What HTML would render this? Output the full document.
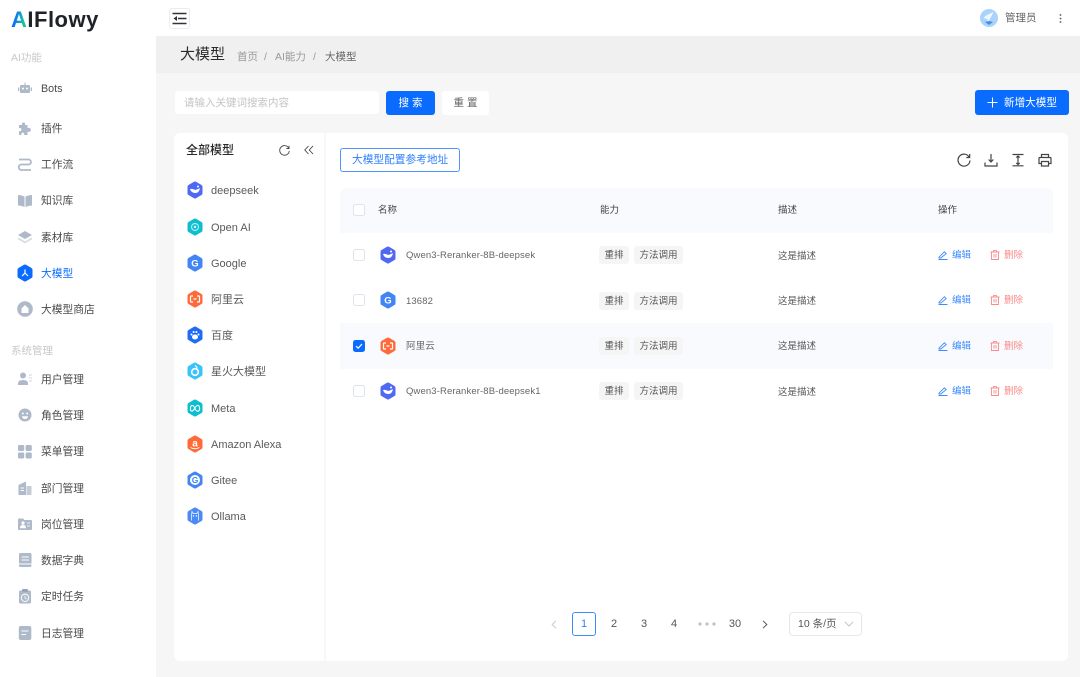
<!DOCTYPE html>
<html lang="zh"><head><meta charset="utf-8"><title>大模型</title>
<style>
*{box-sizing:border-box;margin:0;padding:0}
html,body{width:1080px;height:677px;overflow:hidden;background:#f6f6f6}
body{position:relative;font-family:"Liberation Sans","Noto Sans CJK SC",sans-serif;color:#444;filter:blur(.35px)}
.a{position:absolute}
.t{position:absolute;white-space:nowrap;line-height:16px;height:16px;margin-top:1px}
.nav{font-size:10.75px;color:#4a4a4a;left:41px}
.gr{font-size:10.5px;color:#c9c9c9;left:11px}
.m{font-size:11px;color:#5a5a5a;left:211px}
.n{font-size:9.5px;color:#666;left:406px;letter-spacing:.12px}
.d{font-size:9.5px;color:#555;left:778px}
.h{font-size:9.5px;color:#444}
.tag{position:absolute;height:18px;line-height:20px;background:#f5f5f5;border-radius:3px;font-size:9.5px;color:#555;text-align:center}
.cb{position:absolute;left:353px;width:12px;height:12px;border:1px solid #dfe3ea;border-radius:2.5px;background:#fff}
.blue{font-size:9.5px;color:#3d8bff;left:952px}
.red{font-size:9.5px;color:#fa8a8a;left:1004px}
.pg{font-size:11px;color:#555;text-align:center;width:24px;margin-top:0}
svg{position:absolute;overflow:visible}
.ic{fill:#aeb9ca}
</style></head><body>
<svg width="0" height="0" style="position:absolute"><defs>
<symbol id="hex" viewBox="0 0 18 18"><polygon points="9,2.500 14.500,5.700 14.500,12.300 9,15.500 3.500,12.300 3.500,5.700" fill="currentColor" stroke="currentColor" stroke-width="4" stroke-linejoin="round"/></symbol>
<symbol id="whale" viewBox="0 0 18 18"><path d="M4 8c1 3 3 4 5.500 4 2.500 0 4-2 4.500-5-1 .8-2 .8-2.800 1.200C10 9 8.500 9 7.500 8.300 6.500 7.600 5 8 4 8z" fill="#fff"/><circle cx="12" cy="5.500" r="1" fill="#fff"/></symbol>
<symbol id="ali" viewBox="0 0 18 18"><path d="M7 6H5.200Q4.500 6 4.500 6.800v4.400q0 .8.700.8H7M11 6h1.800q.7 0 .7.800v4.400q0 .8-.7.800H11M7.500 9h3" fill="none" stroke="#fff" stroke-width="1.200"/></symbol>
<symbol id="edit" viewBox="0 0 10 10"><path d="M1 7.200 6.400 1.800 8.200 3.600 2.800 8H1zM.5 9.500h9" fill="none" stroke="#3d8bff" stroke-width=".9"/></symbol>
<symbol id="del" viewBox="0 0 10 10"><path d="M.5 2h9M3.500 2V.6h3V2M1.500 2v7.500h7V2M4 4v3.500M6 4v3.500" fill="none" stroke="#fa8a8a" stroke-width=".9"/></symbol>
</defs></svg>

<!-- main zones -->
<div class="a" style="left:156px;top:36px;width:924px;height:37px;background:#f0f0f0"></div>
<div class="a" style="left:0;top:0;width:156px;height:677px;background:#fff"></div>
<div class="a" style="left:0;top:0;width:1080px;height:36px;background:#fff"></div>

<!-- logo -->
<div class="t" style="left:11px;top:6px;height:26px;line-height:26px;font-size:22px;font-weight:700;color:#1f2226;letter-spacing:.5px"><span style="background:linear-gradient(100deg,#0a6cff 25%,#16c0a0 70%);-webkit-background-clip:text;background-clip:text;color:transparent">A</span>IFlowy</div>

<!-- sidebar groups -->
<div class="t gr" style="top:49px">AI功能</div>
<div class="t gr" style="top:342px">系统管理</div>

<div class="t nav" style="top:80px">Bots</div>
<div class="t nav" style="top:120px">插件</div>
<div class="t nav" style="top:156px">工作流</div>
<div class="t nav" style="top:192px">知识库</div>
<div class="t nav" style="top:229px">素材库</div>
<div class="t nav" style="top:265px;color:#0a6cff">大模型</div>
<div class="t nav" style="top:301px">大模型商店</div>
<div class="t nav" style="top:371px">用户管理</div>
<div class="t nav" style="top:407px">角色管理</div>
<div class="t nav" style="top:443px">菜单管理</div>
<div class="t nav" style="top:480px">部门管理</div>
<div class="t nav" style="top:516px">岗位管理</div>
<div class="t nav" style="top:552px">数据字典</div>
<div class="t nav" style="top:588px">定时任务</div>
<div class="t nav" style="top:625px">日志管理</div>

<!-- sidebar icons -->
<svg style="left:18px;top:81px" width="14" height="14" viewBox="0 0 14 14"><path class="ic" d="M3 4h8q1 0 1 1v6q0 1-1 1H3q-1 0-1-1V5q0-1 1-1zM6.500 1.500h1V4h-1zM0 6.500h1.300v3.500H0zM12.700 6.500H14v3.500h-1.300z"/><circle cx="5" cy="7.500" r="1" fill="#fff"/><circle cx="9" cy="7.500" r="1" fill="#fff"/></svg>
<svg style="left:18px;top:122px" width="14" height="14" viewBox="0 0 14 14"><path class="ic" d="M1 3h3q-.5-2.500 1.500-2.500T7 3h2.500v3q2-.8 3 .8 1 2-.8 3-1 .4-2.200-.3V13H6q.8-2.300-1.200-2.300T3.600 13H1V9q2 .8 2.400-1.200T1 6z"/></svg>
<svg style="left:18px;top:158px" width="14" height="14" viewBox="0 0 14 14"><path d="M1 1.500h9.500a2.500 2.500 0 0 1 0 5H3.500a2.700 2.700 0 0 0 0 5.500H13" fill="none" stroke="#aeb9ca" stroke-width="1.800"/></svg>
<svg style="left:18px;top:194px" width="14" height="14" viewBox="0 0 14 14"><path class="ic" d="M0 1q3.500 0 6.500 1.500V13Q3.500 11.500 0 11.500zM14 1q-3.500 0-6.500 1.500V13q3-1.500 6.500-1.500z"/></svg>
<svg style="left:18px;top:230px" width="14" height="14" viewBox="0 0 14 14"><path class="ic" d="M7 1l7 4-7 4-7-4z"/><path d="M0 7.500l7 4 7-4v1.800l-7 4-7-4z" fill="#d3dae4"/></svg>
<svg style="left:16px;top:264px" width="18" height="18" color="#0a6cff"><use href="#hex" width="18" height="18"/><path d="M9 5.500v3.500M9 9l-3 3M9 9l3 3" stroke="#fff" stroke-width="1.200" fill="none"/></svg>
<svg style="left:17px;top:301px" width="16" height="16" viewBox="0 0 16 16"><circle cx="8" cy="8" r="7.800" class="ic"/><path d="M4.500 7.500 8 4l3.500 3.500V12h-7z" fill="#fff"/></svg>

<svg style="left:18px;top:372px" width="14" height="14" viewBox="0 0 14 14"><circle cx="5" cy="3.500" r="3" class="ic"/><path class="ic" d="M0 13v-1.500Q0 8 5 8t5 3.500V13z"/><path d="M11 3h3M11 6h3M11 9h3" stroke="#cfd6e1" stroke-width="1"/></svg>
<svg style="left:18px;top:408px" width="14" height="14" viewBox="0 0 14 14"><circle cx="7" cy="7" r="6.500" class="ic"/><circle cx="4.800" cy="5.500" r="1" fill="#fff"/><circle cx="9.200" cy="5.500" r="1" fill="#fff"/><path d="M4 8.200h6Q9.500 11 7 11T4 8.200z" fill="#fff"/></svg>
<svg style="left:18px;top:445px" width="14" height="14" viewBox="0 0 14 14"><rect x="0" y="0" width="6.200" height="6" rx="1.200" class="ic"/><rect x="7.600" y="0" width="6.200" height="6" rx="1.200" class="ic"/><rect x="0" y="7.500" width="6.200" height="6" rx="1.200" class="ic"/><rect x="7.600" y="7.500" width="6.200" height="6" rx="1.200" class="ic"/></svg>
<svg style="left:18px;top:481px" width="14" height="14" viewBox="0 0 14 14"><path class="ic" d="M.5 4 8 .5V14H1q-.5 0-.5-.5z"/><path d="M8.500 5H13q.5 0 .5.500V14h-5z" fill="#c3ccd9"/><path d="M2.500 7h3.500M2.500 9.500h3.500" stroke="#fff"/></svg>
<svg style="left:18px;top:517px" width="14" height="14" viewBox="0 0 14 14"><path class="ic" d="M1 1.500h4l1.500 1.500H13q1 0 1 1v8q0 1-1 1H1q-1 0-1-1V2.500q0-1 1-1z"/><circle cx="5" cy="6" r="1.600" fill="#fff"/><path d="M2.500 10.800q0-2.500 2.500-2.500t2.500 2.500zM9 6h3M9 9h3" fill="#fff" stroke="#fff" stroke-width=".8"/></svg>
<svg style="left:18px;top:553px" width="14" height="14" viewBox="0 0 14 14"><rect x="1" y="0" width="12.500" height="14" rx="1.600" class="ic"/><path d="M3.500 4h7.500M3.500 7h7.500M1 11h12.500" stroke="#fff" stroke-width="1"/></svg>
<svg style="left:18px;top:589px" width="14" height="15" viewBox="0 0 14 15"><rect x="1" y="1.500" width="12" height="13" rx="1.600" class="ic"/><rect x="4" y="0" width="6" height="3" rx="1" fill="#98a5b9"/><circle cx="7" cy="8.800" r="3.700" fill="none" stroke="#fff"/><path d="M7 6.800v2.200l1.500 1" fill="none" stroke="#fff" stroke-width=".8"/></svg>
<svg style="left:18px;top:626px" width="14" height="14" viewBox="0 0 14 14"><rect x=".8" y="0" width="12.500" height="14" rx="2" class="ic"/><path d="M3.500 5h7M3.500 8.500h4.500" stroke="#fff" stroke-width="1.100"/></svg>

<!-- topbar -->
<div class="a" style="left:169px;top:8px;width:21px;height:21px;border:1px solid #e8ecf3;border-radius:3px;background:#fff"></div>
<svg style="left:172px;top:12px" width="15" height="13" viewBox="0 0 15 13"><path d="M.5 1.500h14M6 6.500h8.500M.5 11.500h14" stroke="#333" stroke-width="1.400"/><path d="M5 4v5L1.500 6.500z" fill="#333"/></svg>
<svg style="left:980px;top:9px" width="18" height="18" viewBox="0 0 18 18"><circle cx="9" cy="9" r="9" fill="#a9d3fb"/><path d="M13.500 3 6 6.500 3.500 9 7 10l1 3 2-3z" fill="#eef6ff"/><path d="M5 13l4 3 4-3-4-1z" fill="#4a90e2"/></svg>
<div class="t" style="left:1005px;top:9px;font-size:10.5px;color:#666">管理员</div>
<svg style="left:1059px;top:14px" width="3" height="10" viewBox="0 0 3 10"><circle cx="1.500" cy="1" r=".9" fill="#555"/><circle cx="1.500" cy="4.500" r=".9" fill="#555"/><circle cx="1.500" cy="8" r=".9" fill="#555"/></svg>

<!-- heading -->
<div class="t" style="left:180px;top:44px;height:20px;line-height:20px;font-size:15px;color:#2c2c2c">大模型</div>
<div class="t" style="left:237px;top:48px;font-size:10.5px;color:#999">首页</div>
<div class="t" style="left:264px;top:48px;font-size:10.5px;color:#999">/</div>
<div class="t" style="left:275px;top:48px;font-size:10.5px;color:#999">AI能力</div>
<div class="t" style="left:313px;top:48px;font-size:10.5px;color:#999">/</div>
<div class="t" style="left:325px;top:48px;font-size:10.5px;color:#666">大模型</div>

<!-- search -->
<div class="a" style="left:175px;top:91px;width:204px;height:23px;background:#fff;border-radius:3px"></div>
<div class="t" style="left:184px;top:94px;font-size:10.5px;color:#c4c4c4">请输入关键词搜索内容</div>
<div class="a" style="left:386px;top:91px;width:49px;height:24px;background:#0a6cff;border-radius:3px"></div>
<div class="t" style="left:386px;top:94px;width:49px;text-align:center;font-size:10.5px;color:#fff">搜 索</div>
<div class="a" style="left:442px;top:91px;width:47px;height:24px;background:#fff;border-radius:3px"></div>
<div class="t" style="left:442px;top:94px;width:47px;text-align:center;font-size:10.5px;color:#666">重 置</div>
<div class="a" style="left:975px;top:90px;width:94px;height:25px;background:#0a6cff;border-radius:3px"></div>
<svg style="left:987px;top:97px" width="11" height="11" viewBox="0 0 11 11"><path d="M5.500.5v10M.5 5.500h10" stroke="#fff" stroke-width="1"/></svg>
<div class="t" style="left:1004px;top:94px;font-size:10.6px;color:#fff">新增大模型</div>

<!-- card -->
<div class="a" style="left:174px;top:133px;width:894px;height:528px;background:#fff;border-radius:6px"></div>
<div class="a" style="left:324px;top:133px;width:2px;height:528px;background:#f8f8f8"></div>
<div class="t" style="left:186px;top:141px;font-size:12px;font-weight:500;color:#2a2a2a">全部模型</div>
<svg style="left:279px;top:145px" width="11" height="11" viewBox="0 0 11 11"><path d="M9.800 3.200A4.800 4.800 0 1 0 10.300 6M10 .8v2.700H7.400" fill="none" stroke="#444" stroke-width=".9"/></svg>
<svg style="left:304px;top:145px" width="10" height="10" viewBox="0 0 10 10"><path d="M4.500 1 .8 5l3.700 4M9 1 5.300 5 9 9" fill="none" stroke="#444" stroke-width=".9"/></svg>

<!-- model list -->
<svg style="left:186px;top:181px" width="18" height="18" color="#5069f2"><use href="#hex" width="18" height="18"/><use href="#whale" width="18" height="18"/></svg>
<div class="t m" style="top:182px">deepseek</div>
<svg style="left:186px;top:218px" width="18" height="18" color="#0fbdcf"><use href="#hex" width="18" height="18"/><circle cx="9" cy="9" r="3.500" fill="none" stroke="#a5ecf2" stroke-width="1.200"/><circle cx="9" cy="9" r="1.200" fill="#c9f5f8"/></svg>
<div class="t m" style="top:219px">Open AI</div>
<svg style="left:186px;top:254px" width="18" height="18" color="#4285f4"><use href="#hex" width="18" height="18"/><text x="9" y="12.500" font-size="9.500" font-weight="700" text-anchor="middle" fill="#fff" font-family="Liberation Sans">G</text></svg>
<div class="t m" style="top:255px">Google</div>
<svg style="left:186px;top:290px" width="18" height="18" color="#ff6a3a"><use href="#hex" width="18" height="18"/><use href="#ali" width="18" height="18"/></svg>
<div class="t m" style="top:291px">阿里云</div>
<svg style="left:186px;top:326px" width="18" height="18" color="#1f6bf5"><use href="#hex" width="18" height="18"/><ellipse cx="9" cy="11" rx="3" ry="2.500" fill="#fff"/><circle cx="5.500" cy="8.500" r="1" fill="#fff"/><circle cx="12.500" cy="8.500" r="1" fill="#fff"/><circle cx="7.600" cy="6" r="1" fill="#fff"/><circle cx="10.400" cy="6" r="1" fill="#fff"/></svg>
<div class="t m" style="top:327px">百度</div>
<svg style="left:186px;top:362px" width="18" height="18" color="#38c4fb"><use href="#hex" width="18" height="18"/><circle cx="9" cy="10" r="3.300" fill="none" stroke="#fff" stroke-width="1.600"/><path d="M9 3.500q3 2 1.500 4" fill="none" stroke="#fff" stroke-width="1.200"/></svg>
<div class="t m" style="top:363px">星火大模型</div>
<svg style="left:186px;top:399px" width="18" height="18" color="#0cbfd0"><use href="#hex" width="18" height="18"/><path d="M4.500 12V8.500Q5 6 6.500 6.500 8 7 9.500 10.500 11 13 12.500 12q1.500-1 1-3.500-.5-2.500-2-2-1.500.3-3 3-1.500 3-3 2.500-1-.3-1-1" fill="none" stroke="#fff" stroke-width="1.100"/></svg>
<div class="t m" style="top:400px">Meta</div>
<svg style="left:186px;top:435px" width="18" height="18" color="#ff6a3a"><use href="#hex" width="18" height="18"/><text x="9" y="11.500" font-size="10" font-weight="700" text-anchor="middle" fill="#fff" font-family="Liberation Sans">a</text><path d="M4.500 12.500q4.500 2.500 9 0" fill="none" stroke="#fff" stroke-width=".9"/></svg>
<div class="t m" style="top:436px">Amazon Alexa</div>
<svg style="left:186px;top:471px" width="18" height="18" color="#4285f4"><use href="#hex" width="18" height="18"/><circle cx="9" cy="9" r="5" fill="#fff"/><text x="9" y="12" font-size="8.500" font-weight="700" text-anchor="middle" fill="#4285f4" font-family="Liberation Sans">G</text></svg>
<div class="t m" style="top:472px">Gitee</div>
<svg style="left:186px;top:507px" width="18" height="18" color="#4a8af4"><use href="#hex" width="18" height="18"/><path d="M5.500 13.500V7.500L6 4.500 7.200 6.500h3.600L12 4.500l.5 3v6" fill="none" stroke="#cfe0fd" stroke-width="1"/><circle cx="7.500" cy="9" r=".7" fill="#fff"/><circle cx="10.500" cy="9" r=".7" fill="#fff"/></svg>
<div class="t m" style="top:508px">Ollama</div>

<!-- toolbar -->
<div class="a" style="left:340px;top:148px;width:120px;height:24px;border:1px solid #4b93ff;border-radius:3px"></div>
<div class="t" style="left:352px;top:151px;font-size:10.7px;color:#2f80ff">大模型配置参考地址</div>
<svg style="left:957px;top:153px" width="14" height="14" viewBox="0 0 14 14"><path d="M12.300 4.300A6 6 0 1 0 13 7.500M12.700 1v3.500H9.300" fill="none" stroke="#444" stroke-width="1.200"/></svg>
<svg style="left:984px;top:153px" width="14" height="14" viewBox="0 0 14 14"><path d="M7 1v7.500M4.700 6.500 7 9l2.300-2.500M1 9.500V13h12V9.500" fill="none" stroke="#444" stroke-width="1.200"/></svg>
<svg style="left:1011px;top:153px" width="14" height="14" viewBox="0 0 14 14"><path d="M1.500 1.500h11M1.500 12.800h11M7 3v8.500M5.300 4.500 7 3l1.700 1.500M5.300 10 7 11.500 8.700 10" fill="none" stroke="#444" stroke-width="1.200"/></svg>
<svg style="left:1038px;top:153px" width="14" height="14" viewBox="0 0 14 14"><path d="M3.500 4.500V1.500h7v3M3.500 10.500h-2.500V5.500q0-1 1-1h10q1 0 1 1v5h-2.500M3.500 8.500h7v4.500h-7z" fill="none" stroke="#444" stroke-width="1.200"/></svg>

<!-- table -->
<div class="a" style="left:340px;top:188px;width:713px;height:45px;background:#f9fafd;border-radius:6px 6px 0 0"></div>
<div class="a" style="left:340px;top:323px;width:713px;height:46px;background:#f9fafd"></div>
<div class="cb" style="top:204px"></div>
<div class="t h" style="left:378px;top:202px">名称</div>
<div class="t h" style="left:600px;top:202px">能力</div>
<div class="t h" style="left:778px;top:202px">描述</div>
<div class="t h" style="left:938px;top:202px">操作</div>

<div class="cb" style="top:249px"></div>
<div class="cb" style="top:294px"></div>
<div class="cb" style="top:340px;background:#0a6cff;border-color:#0a6cff"></div>
<svg style="left:355px;top:342px" width="8" height="8" viewBox="0 0 8 8"><path d="M1 4.200 3.200 6.200 7 2" fill="none" stroke="#fff" stroke-width="1.200"/></svg>
<div class="cb" style="top:385px"></div>

<svg style="left:379px;top:246px" width="18" height="18" color="#5069f2"><use href="#hex" width="18" height="18"/><use href="#whale" width="18" height="18"/></svg>
<svg style="left:379px;top:291px" width="18" height="18" color="#4285f4"><use href="#hex" width="18" height="18"/><text x="9" y="12.500" font-size="9.500" font-weight="700" text-anchor="middle" fill="#fff" font-family="Liberation Sans">G</text></svg>
<svg style="left:379px;top:337px" width="18" height="18" color="#ff6a3a"><use href="#hex" width="18" height="18"/><use href="#ali" width="18" height="18"/></svg>
<svg style="left:379px;top:382px" width="18" height="18" color="#5069f2"><use href="#hex" width="18" height="18"/><use href="#whale" width="18" height="18"/></svg>

<div class="t n" style="top:247px">Qwen3-Reranker-8B-deepsek</div>
<div class="t n" style="top:293px">13682</div>
<div class="t n" style="top:338px">阿里云</div>
<div class="t n" style="top:383px">Qwen3-Reranker-8B-deepsek1</div>

<div class="tag" style="left:599px;top:246px;width:30px">重排</div><div class="tag" style="left:634px;top:246px;width:49px">方法调用</div>
<div class="tag" style="left:599px;top:292px;width:30px">重排</div><div class="tag" style="left:634px;top:292px;width:49px">方法调用</div>
<div class="tag" style="left:599px;top:337px;width:30px">重排</div><div class="tag" style="left:634px;top:337px;width:49px">方法调用</div>
<div class="tag" style="left:599px;top:382px;width:30px">重排</div><div class="tag" style="left:634px;top:382px;width:49px">方法调用</div>

<div class="t d" style="top:248px">这是描述</div>
<div class="t d" style="top:293px">这是描述</div>
<div class="t d" style="top:338px">这是描述</div>
<div class="t d" style="top:384px">这是描述</div>

<svg style="left:938px;top:250px" width="10" height="10"><use href="#edit" width="10" height="10"/></svg><div class="t blue" style="top:247px">编辑</div>
<svg style="left:990px;top:250px" width="10" height="10"><use href="#del" width="10" height="10"/></svg><div class="t red" style="top:247px">删除</div>
<svg style="left:938px;top:295px" width="10" height="10"><use href="#edit" width="10" height="10"/></svg><div class="t blue" style="top:292px">编辑</div>
<svg style="left:990px;top:295px" width="10" height="10"><use href="#del" width="10" height="10"/></svg><div class="t red" style="top:292px">删除</div>
<svg style="left:938px;top:341px" width="10" height="10"><use href="#edit" width="10" height="10"/></svg><div class="t blue" style="top:338px">编辑</div>
<svg style="left:990px;top:341px" width="10" height="10"><use href="#del" width="10" height="10"/></svg><div class="t red" style="top:338px">删除</div>
<svg style="left:938px;top:386px" width="10" height="10"><use href="#edit" width="10" height="10"/></svg><div class="t blue" style="top:383px">编辑</div>
<svg style="left:990px;top:386px" width="10" height="10"><use href="#del" width="10" height="10"/></svg><div class="t red" style="top:383px">删除</div>

<!-- pagination -->
<svg style="left:551px;top:620px" width="6" height="9" viewBox="0 0 6 9"><path d="M5 .8 1.200 4.500 5 8.200" fill="none" stroke="#c8c8c8"/></svg>
<div class="a" style="left:572px;top:612px;width:24px;height:24px;border:1px solid #3d8bff;border-radius:3px"></div>
<div class="t pg" style="left:572px;top:616px;color:#2f80ff">1</div>
<div class="t pg" style="left:602px;top:616px">2</div>
<div class="t pg" style="left:632px;top:616px">3</div>
<div class="t pg" style="left:662px;top:616px">4</div>
<svg style="left:698px;top:622px" width="18" height="4" viewBox="0 0 18 4"><circle cx="2" cy="2" r="1.600" fill="#c2c2c2"/><circle cx="9" cy="2" r="1.600" fill="#c2c2c2"/><circle cx="16" cy="2" r="1.600" fill="#c2c2c2"/></svg>
<div class="t pg" style="left:723px;top:616px">30</div>
<svg style="left:762px;top:620px" width="6" height="9" viewBox="0 0 6 9"><path d="M1 .8 4.800 4.500 1 8.200" fill="none" stroke="#555"/></svg>
<div class="a" style="left:789px;top:612px;width:73px;height:24px;border:1px solid #e5e7eb;border-radius:4px"></div>
<div class="t" style="left:798px;top:615px;font-size:10.5px;color:#555">10 条/页</div>
<svg style="left:844px;top:621px" width="10" height="6" viewBox="0 0 10 6"><path d="M.8 .8 5 5 9.200 .8" fill="none" stroke="#c4c4c4"/></svg>
</body></html>
